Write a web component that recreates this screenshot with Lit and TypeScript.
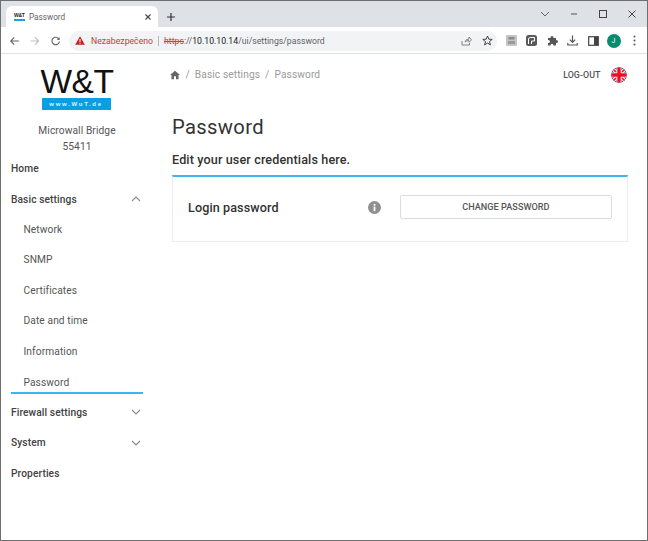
import { LitElement, html, css, svg } from "lit";
import { customElement } from "lit/decorators.js";

const chevUp = html`<svg class="chev" width="10" height="6" viewBox="0 0 10 6"><path d="M1 5 L5 1 L9 5" fill="none" stroke="#8a8a8a" stroke-width="1.1"/></svg>`;
const chevDown = html`<svg class="chev" width="10" height="6" viewBox="0 0 10 6"><path d="M1 1 L5 5 L9 1" fill="none" stroke="#8a8a8a" stroke-width="1.1"/></svg>`;

const flag = svg`<svg width="16" height="16" viewBox="0 0 16 16">
  <defs><clipPath id="c"><circle cx="8" cy="8" r="7.8"/></clipPath></defs>
  <g clip-path="url(#c)">
    <rect width="16" height="16" fill="#2b3f8f"/>
    <path d="M0 0 L16 16 M16 0 L0 16" stroke="#fff" stroke-width="3.4"/>
    <path d="M0 0 L16 16 M16 0 L0 16" stroke="#ee1c2e" stroke-width="1.6"/>
    <path d="M8 0 V16 M0 8 H16" stroke="#fff" stroke-width="5"/>
    <path d="M8 0 V16 M0 8 H16" stroke="#ee1020" stroke-width="3.4"/>
  </g></svg>`;

@customElement("app-root")
export class AppRoot extends LitElement {
  static styles = css`
    :host { display: block; width: 648px; height: 541px; font-family: Roboto, sans-serif; background: #fff; overflow: hidden; }
    .window { box-sizing: border-box; width: 648px; height: 541px; border: 1px solid #6f6f6f; display: flex; flex-direction: column; }
    .strip { height: 26px; background: #dee1e6; display: flex; align-items: flex-end; padding-left: 5px; flex: none; }
    .tab { width: 152px; height: 21px; background: #fff; border-radius: 6px 6px 0 0; display: flex; align-items: center; padding: 0 6px 0 8px; box-sizing: border-box; gap: 4px; font-size: 8.2px; color: #5f6368; }
    .tab .fav { width: 11px; height: 8px; display: flex; flex-direction: column; justify-content: space-between; font: bold 5px/5px "Liberation Sans", sans-serif; color: #222; letter-spacing: -0.3px; }
    .tab .fav i { display: block; height: 2px; background: #1ea0dc; }
    .tab .title { flex: 1; }
    .plus { margin: 0 0 4px 7px; width: 12px; height: 12px; }
    .winctl { margin-left: auto; align-self: stretch; display: flex; align-items: center; padding-right: 1px; }
    .winctl svg { display: block; }
    .winctl .sp { width: 29px; display: flex; justify-content: center; }
    .toolbar { flex: none; background: #fff; display: flex; align-items: center; border-bottom: 1px solid #dfe1e5; padding-top: 1px; box-sizing: border-box; height: 27px; }
    .nav { display: flex; align-items: center; gap: 11px; padding-left: 9px; width: 59px; box-sizing: border-box; flex: none; }
    .nav svg { display: block; }
    .omni { width: 428px; height: 20px; flex: none; margin-left: 9px; background: #f1f3f4; border-radius: 10px; display: flex; align-items: center; padding-left: 6px; box-sizing: border-box; font-size: 8.7px; white-space: nowrap; }
    .warn { color: #c5403a; margin: 0 5px 0 6px; }
    .sep { width: 1px; height: 10px; background: #b5b7ba; margin-right: 5px; }
    .https { color: #c5403a; text-decoration: line-through; }
    .host { color: #202124; }
    .path { color: #5f6368; }
    .omni-end { margin-left: auto; display: flex; align-items: center; gap: 10px; padding-right: 4px; }
    .exts { display: flex; align-items: center; gap: 9.5px; margin-left: 8.5px; }
    .avatar { width: 14px; height: 14px; margin: 0 -1.5px; border-radius: 50%; background: #0b8a70; color: #fff; font-size: 7px; display: flex; align-items: center; justify-content: center; }
    .dots { margin-left: 4px; }
    .page { flex: 1; display: flex; min-height: 0; }
    .side { width: 171px; flex: none; padding: 0 0 0 10px; box-sizing: border-box; }
    .brand { width: 132px; display: flex; flex-direction: column; align-items: center; }
    .wt { font: 400 33.5px/30px "Liberation Sans", sans-serif; color: #111; margin-top: 13px; letter-spacing: -0.4px; height: 30px; }
    .band { width: 69px; height: 12.5px; background: #0a9fe3; color: #dff3fc; font: bold 6px/13px "Liberation Sans", sans-serif; letter-spacing: 1.7px; text-align: center; margin: 0.5px 2px 0 0; }
    .device { margin-top: 13px; font-size: 10.2px; line-height: 15.5px; color: #555; text-align: center; letter-spacing: 0.1px; }
    .menu { margin-top: -0.4px; width: 132px; }
    .item { height: 30.4px; display: flex; align-items: center; justify-content: space-between; font-size: 10.2px; font-weight: 500; color: #424242; letter-spacing: 0.1px; box-sizing: border-box; }
    .sub { font-weight: 400; padding-left: 12.5px; color: #555; }
    .active { height: 27.8px; margin-bottom: 3px; align-items: flex-end; padding-bottom: 4.5px; border-bottom: 2px solid #3db4ee; }
    .chev { margin-right: 2px; }
    .main { flex: 1; min-width: 0; padding-right: 19px; }
    .top { height: 41px; display: flex; align-items: center; font-size: 10.2px; color: #9a9a9a; letter-spacing: 0.1px; margin-left: -2.5px; }
    .top svg { display: block; margin-right: 1px; }
    .crumb { margin-left: 5px; }
    .logout { margin-left: auto; font-size: 8.9px; font-weight: 500; color: #555; letter-spacing: 0.05px; margin-right: 10.5px; }
    .flag { margin-right: 1px; height: 16px; }
    .flag svg { margin: 0; }
    h1 { font-size: 20.2px; line-height: 24px; font-weight: 400; color: #333; margin: 20px 0 0 0; letter-spacing: 0.35px; }
    .lead { font-size: 12.6px; line-height: 16px; font-weight: 500; color: #333; margin-top: 13px; letter-spacing: 0.13px; }
    .card { margin-top: 7px; height: 67px; border: 1px solid #ececec; border-top: 2px solid #3db4ee; box-sizing: border-box; display: flex; align-items: center; padding: 0 15px 4px 15px; }
    .label { font-size: 12.6px; font-weight: 500; color: #333; width: 180px; letter-spacing: 0.1px; }
    .info { width: 13px; height: 13px; display: block; margin-right: 19px; }
    .btn { width: 212.5px; height: 23.5px; border: 1px solid #dcdcdc; border-radius: 2px; display: flex; align-items: center; justify-content: center; font-size: 9.1px; font-weight: 500; color: #555; letter-spacing: 0.05px; box-sizing: border-box; }
  `;

  render() {
    return html`<div class="window">
      <div class="strip">
        <div class="tab">
          <span class="fav">W&T<i></i></span>
          <span class="title">Password</span>
          <svg width="8" height="8" viewBox="0 0 8 8"><path d="M1.5 1.5 L6.5 6.5 M6.5 1.5 L1.5 6.5" stroke="#444" stroke-width="1.1"/></svg>
        </div>
        <svg class="plus" viewBox="0 0 12 12"><path d="M6 2 V10 M2 6 H10" stroke="#333" stroke-width="1.2"/></svg>
        <div class="winctl">
          <span class="sp"><svg width="10" height="6" viewBox="0 0 10 6"><path d="M1 1 L5 5 L9 1" fill="none" stroke="#666" stroke-width="1"/></svg></span>
          <span class="sp"><svg width="10" height="10" viewBox="0 0 10 10"><path d="M2 5 H8" stroke="#555" stroke-width="1"/></svg></span>
          <span class="sp"><svg width="10" height="10" viewBox="0 0 10 10"><rect x="1.5" y="1.5" width="7" height="7" fill="none" stroke="#444" stroke-width="1"/></svg></span>
          <span class="sp"><svg width="10" height="10" viewBox="0 0 10 10"><path d="M1.5 1.5 L8.5 8.5 M8.5 1.5 L1.5 8.5" stroke="#444" stroke-width="1"/></svg></span>
        </div>
      </div>
      <div class="toolbar">
        <div class="nav">
          <svg width="10" height="10" viewBox="0 0 10 10"><path d="M9.5 5 H1 M4.5 1.2 L0.8 5 L4.5 8.8" fill="none" stroke="#5f6368" stroke-width="1.2"/></svg>
          <svg width="10" height="10" viewBox="0 0 10 10"><path d="M0.5 5 H9 M5.5 1.2 L9.2 5 L5.5 8.8" fill="none" stroke="#bcc0c4" stroke-width="1.2"/></svg>
          <svg width="10" height="10" viewBox="0 0 10 10"><path d="M8.5 3 A4 4 0 1 0 9 5.5" fill="none" stroke="#5f6368" stroke-width="1.2"/><path d="M9.2 0.8 V3.8 H6.2 Z" fill="#5f6368"/></svg>
        </div>
        <div class="omni">
          <svg width="10" height="9" viewBox="0 0 10 9"><path d="M5 0.3 L9.8 8.7 H0.2 Z" fill="#c5221f"/><rect x="4.5" y="3" width="1" height="3" fill="#fff"/><rect x="4.5" y="6.6" width="1" height="1" fill="#fff"/></svg>
          <span class="warn">Nezabezpečeno</span><span class="sep"></span>
          <span class="https">https</span><span class="path">://</span><span class="host">10.10.10.14</span><span class="path">/ui/settings/password</span>
          <span class="omni-end">
            <svg width="11" height="10" viewBox="0 0 11 10"><path d="M1 5 V9 H8.5 V7 M4 6 Q4.5 3 8 3 V1 L10.5 3.8 L8 6.3 V4.6 Q5.5 4.5 4 6 Z" fill="none" stroke="#777" stroke-width="0.9"/></svg>
            <svg width="11" height="11" viewBox="0 0 11 11"><path d="M5.5 1 L6.8 4.2 L10.2 4.4 L7.5 6.6 L8.4 9.9 L5.5 8 L2.6 9.9 L3.5 6.6 L0.8 4.4 L4.2 4.2 Z" fill="none" stroke="#444" stroke-width="1"/></svg>
          </span>
        </div>
        <div class="exts">
          <svg width="11" height="11" viewBox="0 0 11 11"><rect width="11" height="11" rx="1" fill="#c4c4c4"/><rect x="2.5" y="2" width="6" height="2.5" fill="#8a8a8a"/><rect x="2" y="6" width="7" height="3" fill="#9a9a9a"/></svg>
          <svg width="11" height="11" viewBox="0 0 11 11"><rect width="11" height="11" rx="2.5" fill="#5a5a5a"/><path d="M2.5 9 V4 Q2.5 2.5 4.5 2.5 H8.5 V6 H5.5 V9" fill="none" stroke="#fff" stroke-width="1"/></svg>
          <svg width="11" height="11" viewBox="0 0 11 11"><path d="M1 3 H3.5 Q3.5 1 5 1 Q6.5 1 6.5 3 H9 V5 Q11 5 11 6.5 Q11 8 9 8 V10.5 H6.5 Q6.5 8.8 5 8.8 Q3.5 8.8 3.5 10.5 H1 V8 Q3 8 3 6.5 Q3 5 1 5 Z" fill="#555"/></svg>
          <svg width="11" height="11" viewBox="0 0 11 11"><path d="M5.5 0.5 V7 M2.8 4.6 L5.5 7.3 L8.2 4.6 M0.8 8 V10 H10.2 V8" fill="none" stroke="#555" stroke-width="1.2"/></svg>
          <svg width="11" height="10" viewBox="0 0 11 10"><rect x="0.7" y="0.7" width="9.6" height="8.6" fill="none" stroke="#444" stroke-width="1.2"/><rect x="6" y="1" width="4" height="8" fill="#444"/></svg>
          <span class="avatar">J</span>
          <svg class="dots" width="3" height="11" viewBox="0 0 3 11"><circle cx="1.5" cy="1.5" r="1" fill="#555"/><circle cx="1.5" cy="5.5" r="1" fill="#555"/><circle cx="1.5" cy="9.5" r="1" fill="#555"/></svg>
        </div>
      </div>
      <div class="page">
        <aside class="side">
          <div class="brand">
            <div class="wt">W&amp;T</div>
            <div class="band">www.WuT.de</div>
            <div class="device">Microwall Bridge<br />55411</div>
          </div>
          <div class="menu">
            <div class="item">Home</div>
            <div class="item">Basic settings ${chevUp}</div>
            <div class="item sub">Network</div>
            <div class="item sub">SNMP</div>
            <div class="item sub">Certificates</div>
            <div class="item sub">Date and time</div>
            <div class="item sub">Information</div>
            <div class="item sub active">Password</div>
            <div class="item">Firewall settings ${chevDown}</div>
            <div class="item">System ${chevDown}</div>
            <div class="item">Properties</div>
          </div>
        </aside>
        <main class="main">
          <div class="top">
            <svg width="10" height="10" viewBox="0 0 11 10"><path d="M5.5 0.3 L11 5 H9.4 V9.7 H6.6 V6.5 H4.4 V9.7 H1.6 V5 H0 Z" fill="#666"/></svg>
            <span class="crumb">/</span><span class="crumb">Basic settings</span><span class="crumb">/</span><span class="crumb">Password</span>
            <span class="logout">LOG-OUT</span>
            <span class="flag">${flag}</span>
          </div>
          <h1>Password</h1>
          <div class="lead">Edit your user credentials here.</div>
          <div class="card">
            <span class="label">Login password</span>
            <svg class="info" viewBox="0 0 13 13"><circle cx="6.5" cy="6.5" r="6.5" fill="#8f8f8f"/><rect x="5.6" y="5.6" width="1.8" height="4.6" fill="#fff"/><rect x="5.6" y="2.9" width="1.8" height="1.8" fill="#fff"/></svg>
            <span class="btn">CHANGE PASSWORD</span>
          </div>
        </main>
      </div>
    </div>`;
  }
}
